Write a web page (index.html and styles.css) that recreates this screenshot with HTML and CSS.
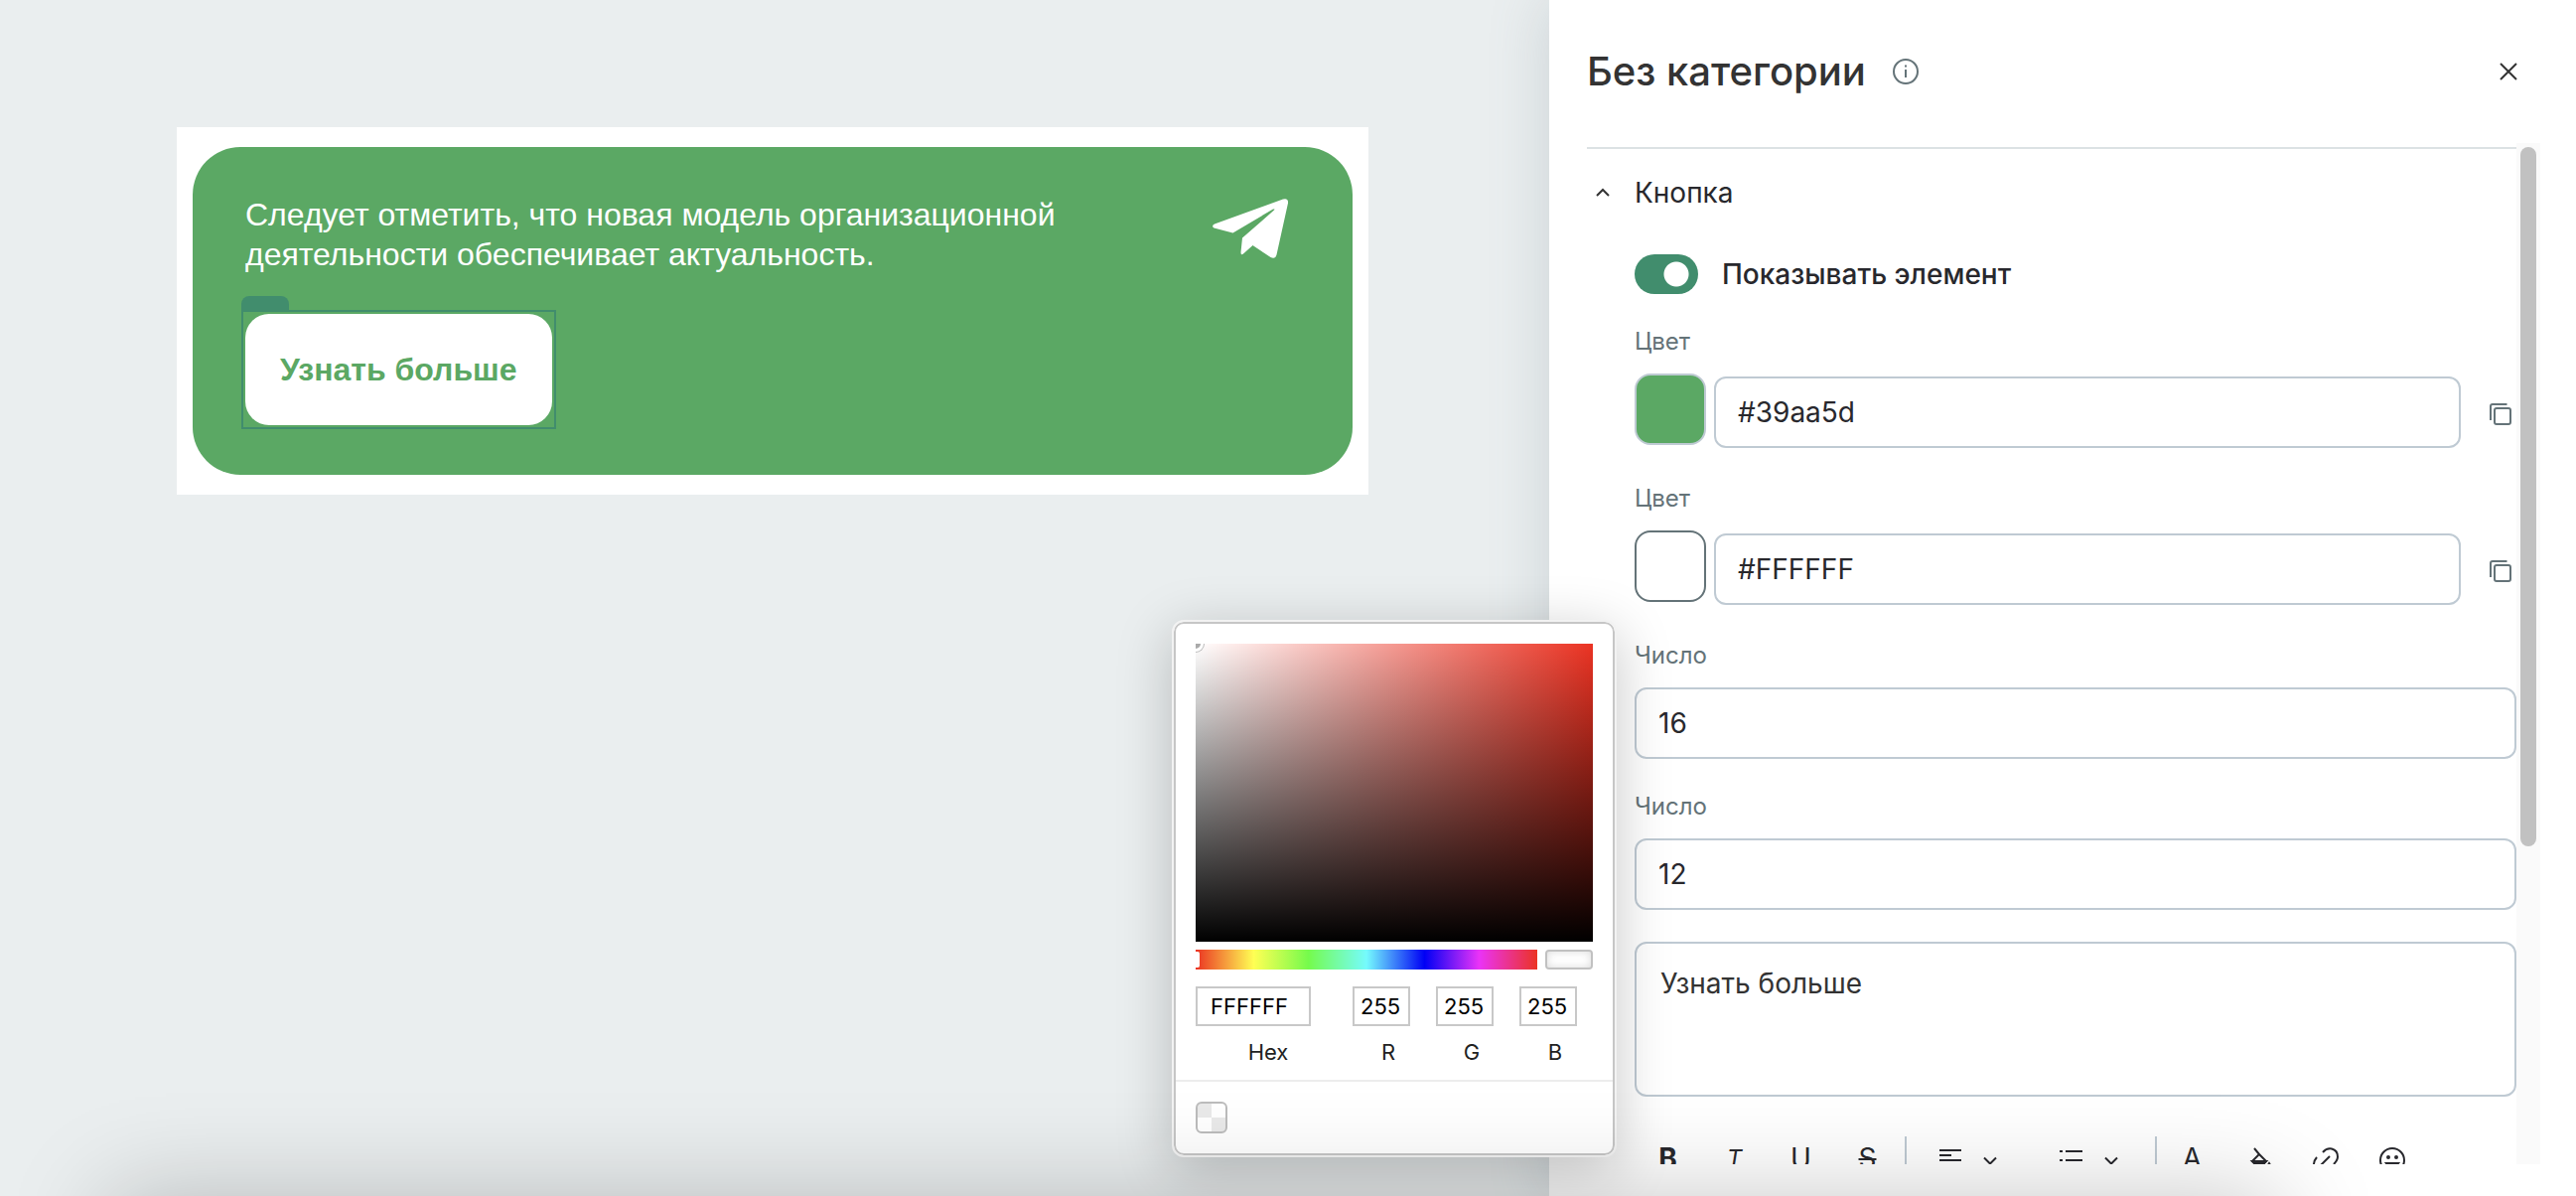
FILE: index.html
```html
<!DOCTYPE html>
<html lang="ru">
<head>
<meta charset="utf-8">
<title>Редактор блока</title>
<link rel="stylesheet" href="styles.css">
</head>
<body>
<div class="editor">
  <main class="canvas">
    <div class="block">
      <section class="banner">
        <div class="banner-body">
          <p class="banner-text">Следует отметить, что новая модель организационной<br>деятельности обеспечивает актуальность.</p>
          <div class="selection">
            <span class="selection-tab"></span>
            <button class="banner-button" type="button">Узнать больше</button>
          </div>
        </div>
        <svg class="telegram" viewBox="0 0 76 60" aria-hidden="true">
          <path d="M2 25.500 71 .5Q76.500-1 76 4.500L64.500 56.500Q63 61.500 58.500 59L40.500 47 31 55.500Q28.500 57.500 28.500 54L30 39.500 62 11.500Q63.500 10 61 10.500L20.500 34.500 1.500 29.500Q-1.500 27.500 2 25.500Z"/>
        </svg>
      </section>
    </div>
  </main>

  <aside class="panel">
    <header class="panel-head">
      <h1 class="panel-title">Без категории</h1>
      <button class="icon-button" type="button" aria-label="Справка">
        <svg class="icon info" width="28" height="28" viewBox="0 0 28 28"><circle cx="14" cy="14" r="12"/><path d="M14 12V20M14 7.500V9.500"/></svg>
      </button>
      <button class="icon-button close" type="button" aria-label="Закрыть">
        <svg class="icon dark" width="20" height="20" viewBox="0 0 20 20"><path d="M2 2 18 18M18 2 2 18"/></svg>
      </button>
    </header>

    <div class="panel-scroll">
      <form class="settings">
        <button class="section-head" type="button">
          <span class="section-mark"><svg class="icon dark" width="16" height="10" viewBox="0 0 16 10"><path d="M2 8 8 2 14 8"/></svg></span>
          Кнопка
        </button>
        <div class="fields">
          <label class="toggle-row">
            <input class="toggle" type="checkbox" checked>
            Показывать элемент
          </label>

          <div class="field">
            <label class="field-label" for="color-main">Цвет</label>
            <div class="color-row">
              <button class="swatch swatch-green" type="button" aria-label="Выбрать цвет"></button>
              <input class="text-input" id="color-main" type="text" value="#39aa5d">
              <button class="icon-button copy" type="button" aria-label="Копировать">
                <svg class="icon slate" width="22" height="22" viewBox="0 0 22 22"><rect x="5" y="5" width="16" height="16" rx="2"/><path d="M1 17V3Q1 1 3 1H17.500"/></svg>
              </button>
            </div>
          </div>

          <div class="field">
            <label class="field-label" for="color-back">Цвет</label>
            <div class="color-row">
              <button class="swatch swatch-white" type="button" aria-label="Выбрать цвет"></button>
              <input class="text-input" id="color-back" type="text" value="#FFFFFF">
              <button class="icon-button copy" type="button" aria-label="Копировать">
                <svg class="icon slate" width="22" height="22" viewBox="0 0 22 22"><rect x="5" y="5" width="16" height="16" rx="2"/><path d="M1 17V3Q1 1 3 1H17.500"/></svg>
              </button>
            </div>
          </div>

          <div class="field field-number">
            <label class="field-label" for="size">Число</label>
            <input class="text-input" id="size" type="text" value="16">
          </div>
          <div class="field field-number">
            <label class="field-label" for="radius">Число</label>
            <input class="text-input" id="radius" type="text" value="12">
          </div>

          <textarea class="text-area" aria-label="Текст кнопки">Узнать больше</textarea>

          <div class="toolbar">
            <button class="tool tool-text tool-bold" type="button">B</button>
            <button class="tool tool-text tool-italic" type="button">T</button>
            <button class="tool tool-text tool-underline" type="button">U</button>
            <button class="tool tool-text tool-strike" type="button">S</button>
            <span class="rule"></span>
            <button class="tool-menu" type="button" aria-label="Выравнивание">
              <svg class="icon ink" width="24" height="24" viewBox="0 0 24 24"><path d="M1 2H23M1 7H13M1 12H23M1 17H13"/></svg>
              <svg class="icon ink" width="24" height="24" viewBox="0 0 24 24"><path d="M6 9.500 12 15.500 18 9.500"/></svg>
            </button>
            <button class="tool-menu" type="button" aria-label="Список">
              <svg class="icon ink" width="24" height="24" viewBox="0 0 24 24"><path d="M0 3H3M6 3H23M0 12H3M6 12H23M0 21H3M6 21H23"/></svg>
              <svg class="icon ink" width="24" height="24" viewBox="0 0 24 24"><path d="M6 9.500 12 15.500 18 9.500"/></svg>
            </button>
            <span class="rule"></span>
            <button class="tool tool-text" type="button">A</button>
            <button class="tool" type="button" aria-label="Заливка">
              <svg class="icon ink" width="24" height="28" viewBox="0 0 24 28"><path d="M7 2 12 8 5 15 12 22 19 15 12 8"/><path class="solid" d="M5 15H19L12 22ZM22 17Q24 20 22 21 20 20 22 17Z"/></svg>
            </button>
            <button class="tool" type="button" aria-label="Ссылка">
              <svg class="icon ink" width="28" height="28" viewBox="0 0 28 28"><path d="M11 6Q15 1.500 20 2.500 26 4 26 10.500 26 14 22 18M5 11Q1.500 15 2 19 4 25 9 26 13 26 17 22M9 19 18 10"/></svg>
            </button>
            <button class="tool" type="button" aria-label="Эмодзи">
              <svg class="icon ink" width="28" height="28" viewBox="0 0 28 28"><circle cx="14" cy="14" r="12"/><path d="M8 17Q14 24 20 17Z"/><circle class="solid" cx="10" cy="11" r="1"/><circle class="solid" cx="18" cy="11" r="1"/></svg>
            </button>
          </div>
        </div>
      </form>
      <div class="scroll-track"><div class="scroll-thumb"></div></div>
    </div>

    <div class="picker">
      <div class="shade"><span class="shade-handle"></span></div>
      <div class="hue-row">
        <div class="hue"><span class="hue-handle"></span></div>
        <div class="preview"></div>
      </div>
      <div class="channels">
        <label class="channel channel-hex"><input class="channel-input" type="text" value="FFFFFF">Hex</label>
        <label class="channel"><input class="channel-input" type="text" value="255">R</label>
        <label class="channel"><input class="channel-input" type="text" value="255">G</label>
        <label class="channel"><input class="channel-input" type="text" value="255">B</label>
      </div>
      <div class="presets"><button class="preset" type="button" aria-label="Прозрачный"></button></div>
    </div>
  </aside>
</div>
<div class="bottom-shade"></div>
</body>
</html>
```
FILE: styles.css
```css
* { box-sizing: border-box; }

body {
  margin: 0;
  overflow: hidden;
  font-family: Inter, "Noto Sans", sans-serif;
  color: #28282d;
}

button, input, textarea {
  margin: 0;
  font: inherit;
  color: inherit;
}

button {
  padding: 0;
  border: 0;
  background: none;
}

.editor {
  display: grid;
  grid-template-columns: 1560fr 1034fr;
  height: 100vh;
}

/* Canvas */
.canvas {
  padding: 128px 182px 0 178px;
  background: #eaeeef;
}

.block {
  padding: 20px 16px;
  background: #fff;
}

.banner {
  display: flex;
  justify-content: space-between;
  align-items: flex-start;
  padding: 48px 65px 50px 53px;
  border-radius: 48px;
  background: #5ba864;
  font-family: "Liberation Sans", Arial, sans-serif;
  font-size: 32px;
  line-height: 40px;
}

.banner-text {
  margin: 0 0 40px;
  color: #fff;
}

.selection {
  position: relative;
  width: fit-content;
  outline: 2px solid #418d6d;
  outline-offset: 2px;
}

.selection-tab {
  position: absolute;
  left: -4px;
  bottom: 100%;
  width: 48px;
  height: 18px;
  border-radius: 8px 8px 0 0;
  background: linear-gradient(#418d6d 16px, transparent 16px);
}

.banner-button {
  position: relative;
  display: block;
  padding: 36px 35px;
  border-radius: 24px;
  background: #fff;
  color: #5ba864;
  font-weight: 700;
}

.telegram {
  width: 76px;
  height: 60px;
  margin-top: 4px;
  fill: #fff;
}

/* Settings panel */
.panel {
  position: relative;
  display: flex;
  flex-direction: column;
  min-height: 0;
  padding: 0 36px 32px 38px;
  background: #fff;
  box-shadow: 0 0 56px rgba(104, 124, 140, .24);
}

.panel-head {
  display: flex;
  flex: 0 0 144px;
  align-items: center;
  gap: 26px;
  padding-right: 22px;
}

.panel-title {
  margin: 0;
  color: #333;
  font-size: 40px;
  font-weight: 500;
  line-height: 48px;
}

.icon-button {
  display: flex;
  align-items: center;
  justify-content: center;
}

.close { margin-left: auto; }

.icon {
  display: block;
  fill: none;
  stroke-width: 2;
}

.info, .slate { stroke: #647378; }
.dark { stroke: #333; }
.ink { stroke: #28282d; }
.solid { fill: #28282d; }

.panel-scroll {
  display: flex;
  flex: 1;
  min-height: 0;
  overflow: hidden;
}

.settings {
  flex: 1;
  min-width: 0;
  margin-top: 4px;
  border-top: 2px solid #dce2e4;
}

.section-head {
  display: flex;
  align-items: center;
  gap: 16px;
  height: 88px;
  font-size: 28px;
}

.section-mark {
  display: flex;
  justify-content: center;
  width: 32px;
}

.fields {
  padding: 18px 0 0 48px;
}

.toggle-row {
  display: flex;
  align-items: center;
  gap: 24px;
  height: 40px;
  margin-bottom: 32px;
  font-size: 28px;
  font-weight: 500;
}

.toggle {
  width: 64px;
  height: 40px;
  appearance: none;
  border-radius: 20px;
  background: radial-gradient(circle at 42px 20px, #fff 12px, #418d6d 13px);
}

.field { margin-bottom: 35px; }
.field-number { margin-bottom: 32px; }

.field-label {
  display: block;
  margin-bottom: 16px;
  color: #647378;
  font-size: 24px;
  line-height: 32px;
}

.color-row {
  display: flex;
  align-items: flex-end;
  gap: 8px;
  height: 75px;
}

.swatch {
  flex: 0 0 72px;
  align-self: flex-start;
  height: 72px;
  border: 2px solid #bfcad3;
  border-radius: 16px;
}

.swatch-green { background: #5ba864; }
.swatch-white { border-color: #647378; background: #fff; }

.text-input {
  display: block;
  width: 100%;
  min-width: 0;
  height: 72px;
  padding: 0 22px;
  border: 2px solid #bfcad3;
  border-radius: 12px;
  background: none;
  font-size: 28px;
}

.copy {
  flex: 0 0 48px;
  height: 72px;
  padding: 4px 0 0 16px;
}

.text-area {
  display: block;
  width: 100%;
  height: 156px;
  margin-bottom: 40px;
  padding: 22px 24px;
  border: 2px solid #bfcad3;
  border-radius: 12px;
  background: none;
  color: #333;
  font-size: 28px;
  line-height: 36px;
  resize: none;
}

.toolbar {
  display: flex;
  height: 48px;
}

.tool {
  display: flex;
  flex: 0 0 67px;
  align-items: center;
  justify-content: center;
}

.tool-text {
  padding-bottom: 4px;
  font-size: 28px;
}

.tool-bold { font-weight: 700; }
.tool-italic { font-size: 24px; font-style: italic; }
.tool-underline { text-decoration: underline; }
.tool-strike { text-decoration: line-through; }

.rule {
  flex: 0 0 2px;
  margin: 0 2px 0 4px;
  background: #bfcad3;
}

.tool-menu {
  display: flex;
  align-items: center;
  gap: 16px;
  padding: 0 28px 0 30px;
}

.scroll-track {
  flex: 0 0 24px;
  padding: 4px;
  background: #fafafa;
}

.scroll-thumb {
  width: 16px;
  height: 69%;
  border-radius: 8px;
  background: #c1c1c1;
}

/* Colour picker popover */
.picker {
  position: absolute;
  top: 624px;
  left: -380px;
  width: 448px;
  border: 2px solid #f2f2f2;
  border-radius: 12px;
  background: #fff;
  box-shadow: inset 0 0 0 2px #c6c6c6, 0 12px 56px rgba(0, 0, 0, .22);
  padding: 22px 2px 2px;
}

.shade {
  position: relative;
  height: 300px;
  margin: 0 20px 8px;
  overflow: hidden;
  background: linear-gradient(to top, #000, transparent), linear-gradient(to right, #fff, #eb3323);
}

.shade-handle {
  position: absolute;
  top: -8px;
  left: -8px;
  width: 16px;
  height: 16px;
  border: 3px solid #fff;
  border-radius: 50%;
  background: #aaa;
  box-shadow: 0 0 0 1px #bbb;
}

.hue-row {
  display: flex;
  gap: 8px;
  height: 20px;
  margin: 0 20px 17px;
}

.hue {
  position: relative;
  flex: 1;
  background: linear-gradient(to right, #eb3323, #ffff54 17%, #75fb4c 33%, #75fbfd 50%, #0000f5 67%, #ea33f7 83%, #eb3323);
}

.hue-handle {
  position: absolute;
  top: 2px;
  bottom: 2px;
  left: 0;
  width: 4px;
  border-radius: 0 2px 2px 0;
  background: #fff;
}

.preview {
  width: 48px;
  border: 2px solid #c1c1c1;
  border-radius: 4px;
  box-shadow: inset 0 0 8px rgba(0, 0, 0, .15);
}

.channels {
  display: flex;
  gap: 26px;
  padding: 0 20px 12px;
  font-size: 22px;
  line-height: 32px;
}

.channel {
  display: flex;
  flex-direction: column;
  align-items: center;
  gap: 10px;
  width: 58px;
  padding-left: 14px;
  color: #222;
}

.channel-hex {
  width: 116px;
  margin-right: 16px;
  padding-left: 30px;
}

.channel-input {
  align-self: flex-end;
  width: 58px;
  height: 40px;
  padding: 0 6px;
  border: 2px solid #c8c8c8;
  background: #fff;
  color: #000;
}

.channel-hex .channel-input {
  width: 116px;
  padding: 0 13px;
}

.presets {
  padding: 20px;
  border-top: 2px solid #ededed;
}

.preset {
  display: block;
  width: 32px;
  height: 32px;
  border: 2px solid #bcbcbc;
  border-radius: 6px;
  background: conic-gradient(#fff 25%, #e9e9e9 0 50%, #fff 0 75%, #e9e9e9 0);
}

/* Soft shade cast from below the window */
.bottom-shade {
  position: fixed;
  top: 100%;
  left: 110px;
  right: 300px;
  height: 400px;
  box-shadow: 0 0 96px rgba(0, 0, 0, .22);
  pointer-events: none;
}
```
